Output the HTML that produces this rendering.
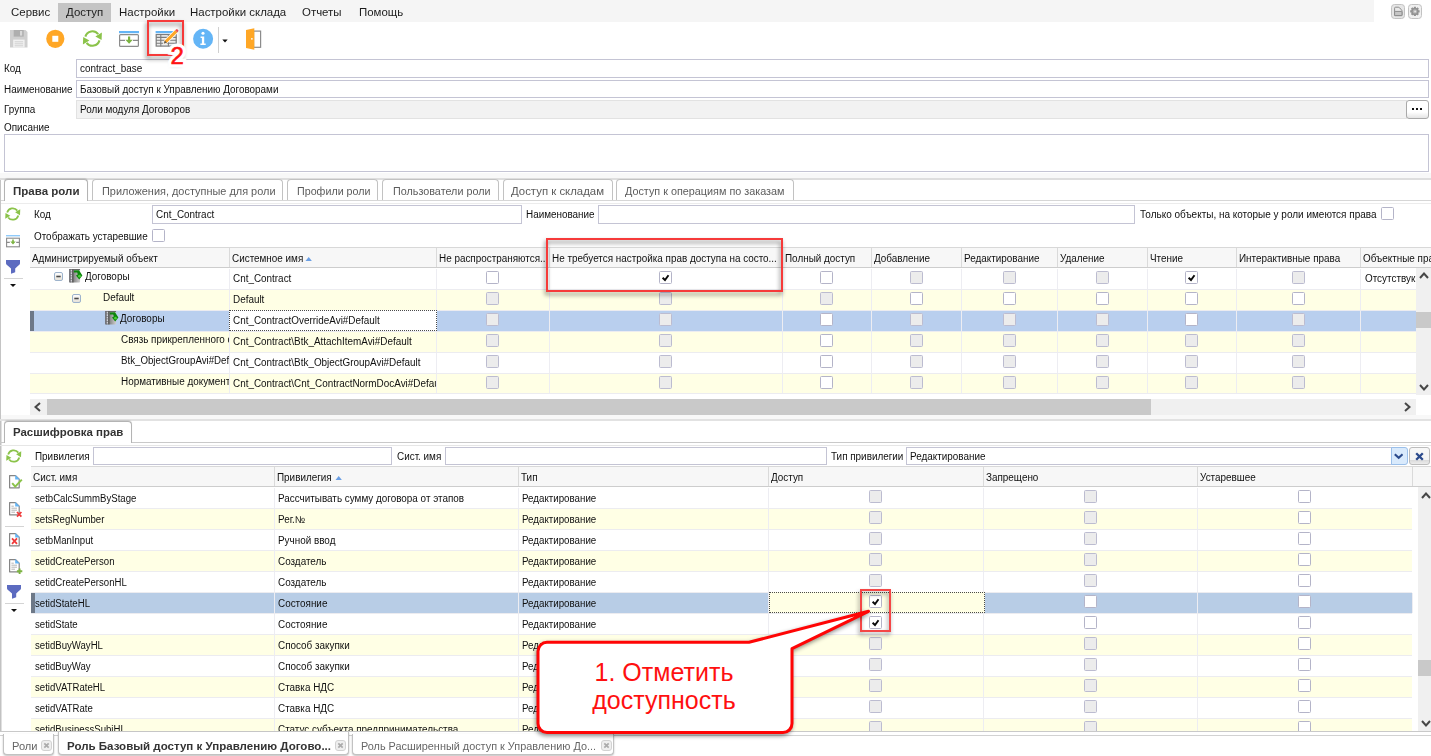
<!DOCTYPE html><html><head><meta charset="utf-8"><title>UI</title><style>
*{box-sizing:border-box;margin:0;padding:0}
html,body{width:1431px;height:756px;overflow:hidden;background:#fff}
body{font-family:"Liberation Sans",sans-serif;font-size:11px;color:#1a1a1a;position:relative}
.abs{position:absolute}
.t{position:absolute;white-space:nowrap;line-height:13px;font-size:10px;transform-origin:0 0;transform:scaleX(.99);color:#101010}
.menubar{position:absolute;left:0;top:0;width:1374px;height:22px;background:#f5f5f5}
.inp{position:absolute;border:1px solid #c4c4d4;background:#fff;height:19px}
.inp.gray{background:#f2f2f2;border-color:#e2e2e2}
.hdr{position:absolute;background:#f7f7f7;border-top:1px solid #d8d8d8;border-bottom:1px solid #cdcdcd;height:21px;overflow:hidden}
.hc{position:absolute;top:0;height:19px;border-right:1px solid #dadada}
.row{position:absolute;height:21px;border-bottom:1px solid #ececf0;overflow:hidden;background:#fff}
.row.y{background:#ffffe5}
.cell{position:absolute;top:0;height:20px;border-right:1px solid #ededf2;overflow:hidden}
.cb{position:absolute;width:13px;height:13px;border:1px solid #b4b4c8;background:#fff;border-radius:1.5px}
.cb.d{background:#ececec;border-color:#bcbcd0}
.tab{position:absolute;border:1px solid #c2c2c2;border-bottom:none;border-radius:4px 4px 0 0;background:#fff;overflow:hidden}
.tab.act{border-color:#b4b4b4;box-shadow:0 -1px 1px rgba(0,0,0,.12)}
.btab{position:absolute;border:1px solid #c2c2c2;border-top:none;border-radius:0 0 4px 4px;background:#fff;box-shadow:0 1px 2px rgba(0,0,0,.25)}
</style></head><body>
<div class="menubar"></div>
<div class="abs" style="left:58px;top:3px;width:53px;height:19px;background:#c4c4c4"></div>
<div class="t" style="left:11px;top:5.2px;font-size:11.5px;line-height:14px;transform:scaleX(0.995);color:#1c1c1c;">Сервис</div>
<div class="t" style="left:66px;top:5.2px;font-size:11.5px;line-height:14px;transform:scaleX(0.995);color:#1c1c1c;">Доступ</div>
<div class="t" style="left:119px;top:5.2px;font-size:11.5px;line-height:14px;transform:scaleX(0.995);color:#1c1c1c;">Настройки</div>
<div class="t" style="left:190px;top:5.2px;font-size:11.5px;line-height:14px;transform:scaleX(0.995);color:#1c1c1c;">Настройки склада</div>
<div class="t" style="left:302px;top:5.2px;font-size:11.5px;line-height:14px;transform:scaleX(0.995);color:#1c1c1c;">Отчеты</div>
<div class="t" style="left:359px;top:5.2px;font-size:11.5px;line-height:14px;transform:scaleX(0.995);color:#1c1c1c;">Помощь</div>
<div class="abs" style="left:1391px;top:4px;width:14px;height:15px;border:1px solid #c2c2c2;border-radius:3.5px;background:#e6e6e6"></div>
<div class="abs" style="left:1407.5px;top:4px;width:14px;height:15px;border:1px solid #c2c2c2;border-radius:3.5px;background:#f0f0f0"></div>
<svg class="abs" style="left:1391px;top:4px" width="14" height="15" viewBox="0 0 14 15"><path d="M3.6 11.6V4.2q0-1 1-1h2.6q.8 0 1.4.6l1.8 2q.6.6.6 1.4v4.4z" fill="#e9e9e9" stroke="#8c8c8c" stroke-width="1"/><rect x="3.6" y="7.4" width="7.4" height="4.2" rx=".6" fill="#c6c6c6" stroke="#8c8c8c" stroke-width="1"/></svg>
<svg class="abs" style="left:1407.5px;top:4px" width="14" height="15" viewBox="0 0 14 15"><circle cx="6.9" cy="7.4" r="3.7" fill="#9a9a9a"/><g stroke="#929292" stroke-width="2.1"><path d="M6.9 2.7v9.4M2.2 7.4h9.4M3.6 4.1l6.6 6.6M10.2 4.1l-6.6 6.6"/></g><circle cx="6.9" cy="7.4" r="2.2" fill="#b4b4b4"/><circle cx="7.1" cy="7.5" r=".9" fill="#e8e8e8"/></svg>
<svg class="abs" style="left:0;top:22px" width="280" height="36" viewBox="0 22 280 36">
<!-- save (disabled) -->
<g>
<path d="M10 30h15.5l2 2v15.5H10z" fill="#cfcfcf"/>
<rect x="13.7" y="30" width="10" height="6.6" fill="#aeaeae"/>
<rect x="20" y="31" width="2.2" height="4.6" fill="#d9d9d9"/>
<rect x="13.2" y="39.6" width="11.4" height="7.9" fill="#f1f1f1"/>
<path d="M14.7 41.8h8.4M14.7 43.8h8.4M14.7 45.8h8.4" stroke="#cdcdcd" stroke-width="0.9"/>
</g>
<!-- stop (orange) -->
<circle cx="55.3" cy="38.8" r="9.1" fill="#ffa726"/>
<rect x="52.3" y="35.8" width="6" height="6" fill="#fff"/>
<!-- refresh -->
<g fill="none" stroke="#8bc34a" stroke-width="2.1">
<path d="M85.35 36.6A7.3 7.3 0 0 1 98.2 34.2"/>
<path d="M99.45 40.4A7.3 7.3 0 0 1 86.6 42.8"/>
</g>
<path d="M101.9 32.6L95.4 36.4L101.6 39.9z" fill="#8bc34a"/>
<path d="M82.9 44.4L89.4 40.6L83.2 37.1z" fill="#8bc34a"/>
<!-- table down -->
<rect x="119" y="31" width="20" height="2.2" fill="#64b5f6"/>
<rect x="119.6" y="34.6" width="18.8" height="11.8" rx="1" fill="#fff" stroke="#8c8c8c" stroke-width="1.2"/>
<path d="M119.6 40.3h5.4M133 40.3h5.4" stroke="#8a8a8a" stroke-width="1.2"/>
<path d="M128 36.5h2.2v3.3h2.6l-3.7 3.9l-3.7-3.9h2.6z" fill="#7cb342"/>
<!-- edit table -->
<rect x="155.6" y="31" width="21.2" height="2.2" fill="#64b5f6"/>
<rect x="156.2" y="34.5" width="20" height="11.6" fill="#ececec" stroke="#7c7c7c" stroke-width="1.2"/>
<path d="M156 37.4h20.4M156 40.3h20.4M156 43.2h20.4M160.8 34.4v11.8M168.4 34.4v11.8" stroke="#7c7c7c" stroke-width="1.1"/>
<path d="M163.9 43.6l.9-3l10.3-10.3l2.1 2.1l-10.3 10.3z" fill="#ffa726" stroke="#fff" stroke-width="1.5" paint-order="stroke" stroke-linejoin="round"/>
<path d="M175.1 30.3l.9-.9a1.1 1.1 0 0 1 1.6 0l.5.5a1.1 1.1 0 0 1 0 1.6l-.9.9z" fill="#ef5350"/>
<path d="M163.9 43.6l.9-3l2.1 2.1z" fill="#5a5a5a"/>
<!-- info -->
<circle cx="203.1" cy="38.7" r="10" fill="#64b5f6"/>
<circle cx="203" cy="33.3" r="1.55" fill="#fff"/>
<path d="M200.6 36.5h3.6v7h1.5v1.4h-5.3v-1.4h1.5v-5.6h-1.3z" fill="#fff"/>
<!-- sep + arrow -->
<rect x="218" y="27" width="1" height="26" fill="#d0d0d0"/>
<path d="M222.3 39.5h5.4l-2.7 3z" fill="#111"/>
<!-- door -->
<rect x="253.6" y="31.1" width="7" height="16.2" fill="#fff" stroke="#8c8c8c" stroke-width="1.2"/>
<path d="M246 30l8.3-1.8v21.6l-8.3-1.8z" fill="#ffa726"/>
<circle cx="251.9" cy="38.8" r="0.9" fill="#fff"/>
</svg>

<div class="t" style="left:4px;top:62px;">Код</div>
<div class="t" style="left:4px;top:83px;">Наименование</div>
<div class="t" style="left:4px;top:103px;">Группа</div>
<div class="t" style="left:4px;top:121px;">Описание</div>
<div class="inp" style="left:76px;top:59px;width:1353px"></div>
<div class="t" style="left:80px;top:62px;">contract_base</div>
<div class="inp" style="left:76px;top:80px;width:1353px;height:18px"></div>
<div class="t" style="left:80px;top:83px;">Базовый доступ к Управлению Договорами</div>
<div class="inp gray" style="left:76px;top:100px;width:1331px"></div>
<div class="t" style="left:80px;top:103px;">Роли модуля Договоров</div>
<div class="abs" style="left:1406px;top:100px;width:23px;height:19px;border:1px solid #a9a9a9;border-radius:3px;background:linear-gradient(#fff 0,#fff 65%,#e4e4e4 100%)"></div>
<div class="abs" style="left:1412px;top:108px;width:2px;height:2px;background:#111"></div>
<div class="abs" style="left:1416px;top:108px;width:2px;height:2px;background:#111"></div>
<div class="abs" style="left:1420px;top:108px;width:2px;height:2px;background:#111"></div>
<div class="inp" style="left:4px;top:134px;width:1425px;height:38px"></div>
<div class="abs" style="left:0;top:173px;width:1431px;height:5px;background:#f8f8f8"></div>
<div class="abs" style="left:0;top:415px;width:1431px;height:4px;background:#f8f8f8"></div>
<div class="abs" style="left:0;top:178px;width:1431px;height:2px;background:#dedede"></div>
<div class="abs" style="left:0;top:200px;width:1431px;height:1px;background:#d6d6d6"></div>
<div class="abs" style="left:0;top:203px;width:1431px;height:1px;background:#ececec"></div>
<div class="abs" style="left:0;top:180px;width:1px;height:240px;background:#c4c4c4"></div>
<div class="abs" style="left:0;top:420px;width:2px;height:312px;background:linear-gradient(90deg,#c2c2c2 0,#c2c2c2 50%,#e0e0e0 50%,#e0e0e0 100%)"></div>
<div class="tab act" style="left:4px;top:179px;width:84px;height:22px"></div>
<div class="tab" style="left:92px;top:179px;width:191px;height:21px"></div>
<div class="tab" style="left:287px;top:179px;width:91px;height:21px"></div>
<div class="tab" style="left:382px;top:179px;width:117px;height:21px"></div>
<div class="tab" style="left:503px;top:179px;width:110px;height:21px"></div>
<div class="tab" style="left:616px;top:179px;width:178px;height:21px"></div>
<div class="t" style="left:12.5px;top:184px;font-size:11px;line-height:14px;transform:scaleX(1.0480);color:#333;font-weight:bold;">Права роли</div>
<div class="t" style="left:101.5px;top:184px;font-size:11px;line-height:14px;transform:scaleX(0.9932);color:#5c5c5c;">Приложения, доступные для роли</div>
<div class="t" style="left:296.5px;top:184px;font-size:11px;line-height:14px;transform:scaleX(0.9733);color:#5c5c5c;">Профили роли</div>
<div class="t" style="left:392.5px;top:184px;font-size:11px;line-height:14px;transform:scaleX(0.9807);color:#5c5c5c;">Пользователи роли</div>
<div class="t" style="left:511px;top:184px;font-size:11px;line-height:14px;transform:scaleX(1.0355);color:#5c5c5c;">Доступ к складам</div>
<div class="t" style="left:625px;top:184px;font-size:11px;line-height:14px;transform:scaleX(0.9831);color:#5c5c5c;">Доступ к операциям по заказам</div>
<div class="t" style="left:34px;top:208px;">Код</div>
<div class="inp" style="left:152px;top:205px;width:370px"></div>
<div class="t" style="left:156px;top:208px;">Cnt_Contract</div>
<div class="t" style="left:526px;top:208px;">Наименование</div>
<div class="inp" style="left:598px;top:205px;width:537px"></div>
<div class="t" style="left:1139.5px;top:208px;transform:scaleX(0.9976);">Только объекты, на которые у роли имеются права</div>
<div class="cb" style="left:1381px;top:207.0px"></div>
<div class="t" style="left:34px;top:230px;">Отображать устаревшие</div>
<div class="cb" style="left:152px;top:229.0px"></div>
<div class="hdr" style="left:30px;top:247px;width:1401px">
<div class="hc" style="left:0px;width:200px"></div>
<div class="hc" style="left:200px;width:207px"></div>
<div class="hc" style="left:407px;width:113px"></div>
<div class="hc" style="left:520px;width:233px"></div>
<div class="hc" style="left:753px;width:89px"></div>
<div class="hc" style="left:842px;width:90px"></div>
<div class="hc" style="left:932px;width:96px"></div>
<div class="hc" style="left:1028px;width:90px"></div>
<div class="hc" style="left:1118px;width:89px"></div>
<div class="hc" style="left:1207px;width:124px"></div>
<div class="hc" style="left:1331px;width:139px"></div>
</div>
<div class="t" style="left:32px;top:252px;">Администрируемый объект</div>
<div class="t" style="left:232px;top:252px;">Системное имя</div>
<div class="t" style="left:439px;top:252px;">Не распространяются..</div>
<div class="t" style="left:552px;top:252px;">Не требуется настройка прав доступа на состо...</div>
<div class="t" style="left:785px;top:252px;">Полный доступ</div>
<div class="t" style="left:874px;top:252px;">Добавление</div>
<div class="t" style="left:964px;top:252px;">Редактирование</div>
<div class="t" style="left:1060px;top:252px;">Удаление</div>
<div class="t" style="left:1150px;top:252px;">Чтение</div>
<div class="t" style="left:1239px;top:252px;">Интерактивные права</div>
<div class="t" style="left:1363px;top:252px;">Объектные пра</div>
<svg class="abs" style="left:304.5px;top:257px" width="7.4" height="4" viewBox="0 0 8 5"><path d="M0 5L4 0L8 5z" fill="#6b9fe4"/></svg>
<div class="row" style="left:30px;top:269px;width:1386px;background:#fff">
<div class="cell" style="left:0px;width:200px;"></div>
<div class="cell" style="left:200px;width:207px;"></div>
<div class="cell" style="left:407px;width:113px;"></div>
<div class="cell" style="left:520px;width:233px;"></div>
<div class="cell" style="left:753px;width:89px;"></div>
<div class="cell" style="left:842px;width:90px;"></div>
<div class="cell" style="left:932px;width:96px;"></div>
<div class="cell" style="left:1028px;width:90px;"></div>
<div class="cell" style="left:1118px;width:89px;"></div>
<div class="cell" style="left:1207px;width:124px;"></div>
<div class="cell" style="left:1331px;width:139px;"></div>
<div class="cb" style="left:456px;top:2.0px"></div>
<div class="cb" style="left:629px;top:2.0px"><svg width="11" height="11" viewBox="0 0 11 11" style="position:absolute;left:0;top:0"><path d="M2.6 5.7 L5 8 L8.5 3.2" fill="none" stroke="#0a0a0a" stroke-width="1.9"/></svg></div>
<div class="cb" style="left:790px;top:2.0px"></div>
<div class="cb d" style="left:880px;top:2.0px"></div>
<div class="cb d" style="left:973px;top:2.0px"></div>
<div class="cb d" style="left:1066px;top:2.0px"></div>
<div class="cb" style="left:1155px;top:2.0px"><svg width="11" height="11" viewBox="0 0 11 11" style="position:absolute;left:0;top:0"><path d="M2.6 5.7 L5 8 L8.5 3.2" fill="none" stroke="#0a0a0a" stroke-width="1.9"/></svg></div>
<div class="cb d" style="left:1262px;top:2.0px"></div>
</div>
<div class="abs" style="left:30px;top:269px;width:199px;height:20px;overflow:hidden">
<div class="t" style="left:55px;top:1px;">Договоры</div>
</div>
<div class="abs" style="left:230px;top:269px;width:206px;height:20px;overflow:hidden">
<div class="t" style="left:3px;top:3px;">Cnt_Contract</div>
</div>
<div class="abs" style="left:1361px;top:269px;width:55px;height:20px;overflow:hidden">
<div class="t" style="left:4px;top:3px;">Отсутствук</div>
</div>
<div class="row" style="left:30px;top:290px;width:1386px;background:#ffffe5">
<div class="cell" style="left:0px;width:200px;"></div>
<div class="cell" style="left:200px;width:207px;"></div>
<div class="cell" style="left:407px;width:113px;"></div>
<div class="cell" style="left:520px;width:233px;"></div>
<div class="cell" style="left:753px;width:89px;"></div>
<div class="cell" style="left:842px;width:90px;"></div>
<div class="cell" style="left:932px;width:96px;"></div>
<div class="cell" style="left:1028px;width:90px;"></div>
<div class="cell" style="left:1118px;width:89px;"></div>
<div class="cell" style="left:1207px;width:124px;"></div>
<div class="cell" style="left:1331px;width:139px;"></div>
<div class="cb d" style="left:456px;top:2.0px"></div>
<div class="cb d" style="left:629px;top:2.0px"></div>
<div class="cb d" style="left:790px;top:2.0px"></div>
<div class="cb" style="left:880px;top:2.0px"></div>
<div class="cb" style="left:973px;top:2.0px"></div>
<div class="cb" style="left:1066px;top:2.0px"></div>
<div class="cb" style="left:1155px;top:2.0px"></div>
<div class="cb" style="left:1262px;top:2.0px"></div>
</div>
<div class="abs" style="left:30px;top:290px;width:199px;height:20px;overflow:hidden">
<div class="t" style="left:72.5px;top:1px;">Default</div>
</div>
<div class="abs" style="left:230px;top:290px;width:206px;height:20px;overflow:hidden">
<div class="t" style="left:3px;top:3px;">Default</div>
</div>
<div class="row" style="left:30px;top:311px;width:1386px;background:#b9cfee">
<div class="cell" style="left:0px;width:200px;"></div>
<div class="cell" style="left:200px;width:207px;"></div>
<div class="cell" style="left:407px;width:113px;"></div>
<div class="cell" style="left:520px;width:233px;"></div>
<div class="cell" style="left:753px;width:89px;"></div>
<div class="cell" style="left:842px;width:90px;"></div>
<div class="cell" style="left:932px;width:96px;"></div>
<div class="cell" style="left:1028px;width:90px;"></div>
<div class="cell" style="left:1118px;width:89px;"></div>
<div class="cell" style="left:1207px;width:124px;"></div>
<div class="cell" style="left:1331px;width:139px;"></div>
<div class="cb d" style="left:456px;top:2.0px"></div>
<div class="cb d" style="left:629px;top:2.0px"></div>
<div class="cb" style="left:790px;top:2.0px"></div>
<div class="cb d" style="left:880px;top:2.0px"></div>
<div class="cb d" style="left:973px;top:2.0px"></div>
<div class="cb d" style="left:1066px;top:2.0px"></div>
<div class="cb" style="left:1155px;top:2.0px"></div>
<div class="cb d" style="left:1262px;top:2.0px"></div>
<div class="abs" style="left:0;top:0;width:4px;height:20px;background:#6d7888"></div>
</div>
<div class="abs" style="left:229px;top:310px;width:208px;height:21px;background:#fff;border:1px dotted #4a4a4a"></div>
<div class="abs" style="left:30px;top:311px;width:199px;height:20px;overflow:hidden">
<div class="t" style="left:90px;top:1px;">Договоры</div>
</div>
<div class="abs" style="left:230px;top:311px;width:206px;height:20px;overflow:hidden">
<div class="t" style="left:3px;top:3px;">Cnt_ContractOverrideAvi#Default</div>
</div>
<div class="row" style="left:30px;top:332px;width:1386px;background:#ffffe5">
<div class="cell" style="left:0px;width:200px;"></div>
<div class="cell" style="left:200px;width:207px;"></div>
<div class="cell" style="left:407px;width:113px;"></div>
<div class="cell" style="left:520px;width:233px;"></div>
<div class="cell" style="left:753px;width:89px;"></div>
<div class="cell" style="left:842px;width:90px;"></div>
<div class="cell" style="left:932px;width:96px;"></div>
<div class="cell" style="left:1028px;width:90px;"></div>
<div class="cell" style="left:1118px;width:89px;"></div>
<div class="cell" style="left:1207px;width:124px;"></div>
<div class="cell" style="left:1331px;width:139px;"></div>
<div class="cb d" style="left:456px;top:2.0px"></div>
<div class="cb d" style="left:629px;top:2.0px"></div>
<div class="cb" style="left:790px;top:2.0px"></div>
<div class="cb d" style="left:880px;top:2.0px"></div>
<div class="cb d" style="left:973px;top:2.0px"></div>
<div class="cb d" style="left:1066px;top:2.0px"></div>
<div class="cb d" style="left:1155px;top:2.0px"></div>
<div class="cb d" style="left:1262px;top:2.0px"></div>
</div>
<div class="abs" style="left:30px;top:332px;width:199px;height:20px;overflow:hidden">
<div class="t" style="left:91px;top:1px;">Связь прикрепленного с</div>
</div>
<div class="abs" style="left:230px;top:332px;width:206px;height:20px;overflow:hidden">
<div class="t" style="left:3px;top:3px;">Cnt_Contract\Btk_AttachItemAvi#Default</div>
</div>
<div class="row" style="left:30px;top:353px;width:1386px;background:#fff">
<div class="cell" style="left:0px;width:200px;"></div>
<div class="cell" style="left:200px;width:207px;"></div>
<div class="cell" style="left:407px;width:113px;"></div>
<div class="cell" style="left:520px;width:233px;"></div>
<div class="cell" style="left:753px;width:89px;"></div>
<div class="cell" style="left:842px;width:90px;"></div>
<div class="cell" style="left:932px;width:96px;"></div>
<div class="cell" style="left:1028px;width:90px;"></div>
<div class="cell" style="left:1118px;width:89px;"></div>
<div class="cell" style="left:1207px;width:124px;"></div>
<div class="cell" style="left:1331px;width:139px;"></div>
<div class="cb d" style="left:456px;top:2.0px"></div>
<div class="cb d" style="left:629px;top:2.0px"></div>
<div class="cb" style="left:790px;top:2.0px"></div>
<div class="cb d" style="left:880px;top:2.0px"></div>
<div class="cb d" style="left:973px;top:2.0px"></div>
<div class="cb d" style="left:1066px;top:2.0px"></div>
<div class="cb d" style="left:1155px;top:2.0px"></div>
<div class="cb d" style="left:1262px;top:2.0px"></div>
</div>
<div class="abs" style="left:30px;top:353px;width:199px;height:20px;overflow:hidden">
<div class="t" style="left:91px;top:1px;transform:scaleX(0.97);">Btk_ObjectGroupAvi#Default</div>
</div>
<div class="abs" style="left:230px;top:353px;width:206px;height:20px;overflow:hidden">
<div class="t" style="left:3px;top:3px;">Cnt_Contract\Btk_ObjectGroupAvi#Default</div>
</div>
<div class="row" style="left:30px;top:374px;width:1386px;background:#ffffe5">
<div class="cell" style="left:0px;width:200px;"></div>
<div class="cell" style="left:200px;width:207px;"></div>
<div class="cell" style="left:407px;width:113px;"></div>
<div class="cell" style="left:520px;width:233px;"></div>
<div class="cell" style="left:753px;width:89px;"></div>
<div class="cell" style="left:842px;width:90px;"></div>
<div class="cell" style="left:932px;width:96px;"></div>
<div class="cell" style="left:1028px;width:90px;"></div>
<div class="cell" style="left:1118px;width:89px;"></div>
<div class="cell" style="left:1207px;width:124px;"></div>
<div class="cell" style="left:1331px;width:139px;"></div>
<div class="cb d" style="left:456px;top:2.0px"></div>
<div class="cb d" style="left:629px;top:2.0px"></div>
<div class="cb" style="left:790px;top:2.0px"></div>
<div class="cb d" style="left:880px;top:2.0px"></div>
<div class="cb d" style="left:973px;top:2.0px"></div>
<div class="cb d" style="left:1066px;top:2.0px"></div>
<div class="cb d" style="left:1155px;top:2.0px"></div>
<div class="cb d" style="left:1262px;top:2.0px"></div>
</div>
<div class="abs" style="left:30px;top:374px;width:199px;height:20px;overflow:hidden">
<div class="t" style="left:91px;top:1px;">Нормативные документы</div>
</div>
<div class="abs" style="left:230px;top:374px;width:206px;height:20px;overflow:hidden">
<div class="t" style="left:3px;top:3px;">Cnt_Contract\Cnt_ContractNormDocAvi#Default</div>
</div>
<div class="abs" style="left:30px;top:393px;width:1386px;height:6px;background:#fff;border-top:1px solid #ececf0"></div>
<svg width="0" height="0" style="position:absolute"><defs>
<linearGradient id="g-exp" x1="0" y1="0" x2="0" y2="1"><stop offset="0" stop-color="#fff"/><stop offset="1" stop-color="#e4e0d6"/></linearGradient>
<linearGradient id="g-door" x1="0" y1="0" x2="1" y2="0"><stop offset="0" stop-color="#6e6e6e"/><stop offset=".45" stop-color="#8c8c8c"/><stop offset="1" stop-color="#d0d0d0"/></linearGradient>
<g id="i-exp"><rect x=".5" y=".5" width="8" height="8" rx="1.5" fill="url(#g-exp)" stroke="#9db3cc"/><rect x="2.3" y="3.7" width="4.4" height="1.6" fill="#4a4a4a"/></g>
<g id="i-door"><rect x=".3" y=".1" width="10.8" height="13.3" rx=".9" fill="url(#g-door)"/><rect x=".3" y=".1" width="10.8" height="1" rx=".5" fill="#6a6a6a"/><rect x=".3" y=".1" width="1.4" height="13.3" fill="#6c6c72"/><path d="M2.3 .8v12.4" stroke="#e2e2ea" stroke-width="1.1" stroke-dasharray="1.6 .9"/><rect x="3.1" y=".1" width="1.5" height="13.3" fill="#5e5e5e"/><path d="M4.9 1.4L10 1.2L13.4 6.6L10.2 10.6L7 6.4L8.8 5.6L8.2 3.6L4.9 3.6Z" fill="#0c860c"/><circle cx="10.5" cy="7.2" r="1.35" fill="#4ad038"/></g>
</defs></svg>
<svg class="abs" style="left:54px;top:272.2px" width="9" height="9" viewBox="0 0 9 9"><use href="#i-exp"/></svg>
<svg class="abs" style="left:69.4px;top:269px" width="14" height="14" viewBox="0 0 14 14"><use href="#i-door"/></svg>
<svg class="abs" style="left:72px;top:293.6px" width="9" height="9" viewBox="0 0 9 9"><use href="#i-exp"/></svg>
<svg class="abs" style="left:104.6px;top:311px" width="14" height="14" viewBox="0 0 14 14"><use href="#i-door"/></svg>

<div class="abs" style="left:1416px;top:268px;width:15px;height:127px;background:#f0f0f0"></div>
<div class="abs" style="left:1416px;top:312px;width:15px;height:16px;background:#c9c9c9"></div>
<svg class="abs" style="left:1419px;top:272px" width="10" height="7" viewBox="0 0 10 7"><path d="M1 6L5 1.5L9 6" fill="none" stroke="#474747" stroke-width="2"/></svg>
<svg class="abs" style="left:1419px;top:384px" width="10" height="7" viewBox="0 0 10 7"><path d="M1 1L5 5.5L9 1" fill="none" stroke="#474747" stroke-width="2"/></svg>
<div class="abs" style="left:30px;top:399px;width:1386px;height:16px;background:#f0f0f0"></div>
<div class="abs" style="left:47px;top:399px;width:1104px;height:16px;background:#c9c9c9"></div>
<svg class="abs" style="left:34px;top:402px" width="7" height="10" viewBox="0 0 7 10"><path d="M6 1L1.5 5L6 9" fill="none" stroke="#474747" stroke-width="2"/></svg>
<svg class="abs" style="left:1404px;top:402px" width="7" height="10" viewBox="0 0 7 10"><path d="M1 1L5.5 5L1 9" fill="none" stroke="#474747" stroke-width="2"/></svg>
<div class="abs" style="left:0;top:419px;width:1431px;height:2px;background:#e2e2e2"></div>
<div class="abs" style="left:0;top:442px;width:1431px;height:1px;background:#c9c9c9"></div>
<div class="abs" style="left:0;top:445px;width:1431px;height:1px;background:#e6e6e6"></div>
<div class="tab act" style="left:4px;top:421px;width:128px;height:22px"></div>
<div class="t" style="left:13px;top:425px;font-size:11px;line-height:14px;transform:scaleX(1.04);color:#333;font-weight:bold;">Расшифровка прав</div>
<div class="t" style="left:35px;top:450px;">Привилегия</div>
<div class="inp" style="left:93px;top:447px;width:299px;height:18px"></div>
<div class="t" style="left:397px;top:450px;">Сист. имя</div>
<div class="inp" style="left:445px;top:447px;width:382px;height:18px"></div>
<div class="t" style="left:831px;top:450px;">Тип привилегии</div>
<div class="inp" style="left:906px;top:447px;width:486px;height:18px"></div>
<div class="t" style="left:910px;top:450px;">Редактирование</div>
<div class="abs" style="left:1391px;top:447px;width:17px;height:18px;border:1px solid #9bbfe9;border-radius:0 3px 3px 0;background:#d9eafc"></div>
<svg class="abs" style="left:1394px;top:453.4px" width="9.4" height="6.4" viewBox="0 0 9.4 6.4"><path d="M.8 1.2L4.7 4.8L8.6 1.2" fill="none" stroke="#2b4a8c" stroke-width="2.1"/></svg>
<div class="abs" style="left:1409px;top:447px;width:21px;height:18px;border:1px solid #bcbcbc;border-radius:3px;background:linear-gradient(#f8f8f8 0,#f4f4f4 72%,#dcdcdc 78%,#ececec 100%)"></div>
<svg class="abs" style="left:1414.6px;top:452.2px" width="9" height="9" viewBox="0 0 9 9"><path d="M1.2 1.2L7.8 7.8M7.8 1.2L1.2 7.8" fill="none" stroke="#2b4a8c" stroke-width="2.3"/></svg>
<div class="hdr" style="left:31px;top:466px;width:1400px">
<div class="hc" style="left:0px;width:244px"></div>
<div class="hc" style="left:244px;width:244px"></div>
<div class="hc" style="left:488px;width:250px"></div>
<div class="hc" style="left:738px;width:215px"></div>
<div class="hc" style="left:953px;width:214px"></div>
<div class="hc" style="left:1167px;width:215px"></div>
</div>
<div class="t" style="left:33px;top:471px;">Сист. имя</div>
<div class="t" style="left:277px;top:471px;">Привилегия</div>
<div class="t" style="left:521px;top:471px;">Тип</div>
<div class="t" style="left:771px;top:471px;">Доступ</div>
<div class="t" style="left:986px;top:471px;">Запрещено</div>
<div class="t" style="left:1200px;top:471px;">Устаревшее</div>
<svg class="abs" style="left:334.5px;top:476px" width="7.4" height="4" viewBox="0 0 8 5"><path d="M0 5L4 0L8 5z" fill="#6b9fe4"/></svg>
<div class="abs" style="left:31px;top:488px;width:1400px;height:243px;overflow:hidden">
<div class="row" style="left:0;top:0px;width:1381px;background:#fff;">
<div class="cell" style="left:0px;width:244px;"></div>
<div class="cell" style="left:244px;width:244px;"></div>
<div class="cell" style="left:488px;width:250px;"></div>
<div class="cell" style="left:738px;width:215px;"></div>
<div class="cell" style="left:953px;width:214px;"></div>
<div class="cell" style="left:1167px;width:215px;"></div>
<div class="cb d" style="left:838px;top:2.0px"></div>
<div class="cb d" style="left:1053px;top:2.0px"></div>
<div class="cb" style="left:1267px;top:2.0px"></div>
<div class="t" style="left:4px;top:4px;transform:scaleX(0.96);">setbCalcSummByStage</div>
<div class="t" style="left:247px;top:4px;">Рассчитывать сумму договора от этапов</div>
<div class="t" style="left:491px;top:4px;transform:scaleX(0.975);">Редактирование</div>
</div>
<div class="row" style="left:0;top:21px;width:1381px;background:#ffffe5;">
<div class="cell" style="left:0px;width:244px;"></div>
<div class="cell" style="left:244px;width:244px;"></div>
<div class="cell" style="left:488px;width:250px;"></div>
<div class="cell" style="left:738px;width:215px;"></div>
<div class="cell" style="left:953px;width:214px;"></div>
<div class="cell" style="left:1167px;width:215px;"></div>
<div class="cb d" style="left:838px;top:2.0px"></div>
<div class="cb d" style="left:1053px;top:2.0px"></div>
<div class="cb" style="left:1267px;top:2.0px"></div>
<div class="t" style="left:4px;top:4px;transform:scaleX(0.96);">setsRegNumber</div>
<div class="t" style="left:247px;top:4px;">Рег.№</div>
<div class="t" style="left:491px;top:4px;transform:scaleX(0.975);">Редактирование</div>
</div>
<div class="row" style="left:0;top:42px;width:1381px;background:#fff;">
<div class="cell" style="left:0px;width:244px;"></div>
<div class="cell" style="left:244px;width:244px;"></div>
<div class="cell" style="left:488px;width:250px;"></div>
<div class="cell" style="left:738px;width:215px;"></div>
<div class="cell" style="left:953px;width:214px;"></div>
<div class="cell" style="left:1167px;width:215px;"></div>
<div class="cb d" style="left:838px;top:2.0px"></div>
<div class="cb d" style="left:1053px;top:2.0px"></div>
<div class="cb" style="left:1267px;top:2.0px"></div>
<div class="t" style="left:4px;top:4px;transform:scaleX(0.96);">setbManInput</div>
<div class="t" style="left:247px;top:4px;">Ручной ввод</div>
<div class="t" style="left:491px;top:4px;transform:scaleX(0.975);">Редактирование</div>
</div>
<div class="row" style="left:0;top:63px;width:1381px;background:#ffffe5;">
<div class="cell" style="left:0px;width:244px;"></div>
<div class="cell" style="left:244px;width:244px;"></div>
<div class="cell" style="left:488px;width:250px;"></div>
<div class="cell" style="left:738px;width:215px;"></div>
<div class="cell" style="left:953px;width:214px;"></div>
<div class="cell" style="left:1167px;width:215px;"></div>
<div class="cb d" style="left:838px;top:2.0px"></div>
<div class="cb d" style="left:1053px;top:2.0px"></div>
<div class="cb" style="left:1267px;top:2.0px"></div>
<div class="t" style="left:4px;top:4px;transform:scaleX(0.96);">setidCreatePerson</div>
<div class="t" style="left:247px;top:4px;">Создатель</div>
<div class="t" style="left:491px;top:4px;transform:scaleX(0.975);">Редактирование</div>
</div>
<div class="row" style="left:0;top:84px;width:1381px;background:#fff;">
<div class="cell" style="left:0px;width:244px;"></div>
<div class="cell" style="left:244px;width:244px;"></div>
<div class="cell" style="left:488px;width:250px;"></div>
<div class="cell" style="left:738px;width:215px;"></div>
<div class="cell" style="left:953px;width:214px;"></div>
<div class="cell" style="left:1167px;width:215px;"></div>
<div class="cb d" style="left:838px;top:2.0px"></div>
<div class="cb d" style="left:1053px;top:2.0px"></div>
<div class="cb" style="left:1267px;top:2.0px"></div>
<div class="t" style="left:4px;top:4px;transform:scaleX(0.96);">setidCreatePersonHL</div>
<div class="t" style="left:247px;top:4px;">Создатель</div>
<div class="t" style="left:491px;top:4px;transform:scaleX(0.975);">Редактирование</div>
</div>
<div class="row" style="left:0;top:105px;width:1381px;background:#b8cde6;overflow:visible;">
<div class="cell" style="left:0px;width:244px;"></div>
<div class="cell" style="left:244px;width:244px;"></div>
<div class="cell" style="left:488px;width:250px;"></div>
<div class="cell" style="left:738px;width:215px;"></div>
<div class="cell" style="left:953px;width:214px;"></div>
<div class="cell" style="left:1167px;width:215px;"></div>
<div class="abs" style="left:738px;top:-1px;width:216px;height:21px;background:#ffffe5;border:1px dotted #4a4a4a"></div>
<div class="cb" style="left:838px;top:2.0px"><svg width="11" height="11" viewBox="0 0 11 11" style="position:absolute;left:0;top:0"><path d="M2.6 5.7 L5 8 L8.5 3.2" fill="none" stroke="#0a0a0a" stroke-width="1.9"/></svg></div>
<div class="cb" style="left:1053px;top:2.0px"></div>
<div class="cb" style="left:1267px;top:2.0px"></div>
<div class="abs" style="left:0;top:0;width:4px;height:20px;background:#6d7888"></div>
<div class="t" style="left:4px;top:4px;transform:scaleX(0.96);">setidStateHL</div>
<div class="t" style="left:247px;top:4px;">Состояние</div>
<div class="t" style="left:491px;top:4px;transform:scaleX(0.975);">Редактирование</div>
</div>
<div class="row" style="left:0;top:126px;width:1381px;background:#fff;">
<div class="cell" style="left:0px;width:244px;"></div>
<div class="cell" style="left:244px;width:244px;"></div>
<div class="cell" style="left:488px;width:250px;"></div>
<div class="cell" style="left:738px;width:215px;"></div>
<div class="cell" style="left:953px;width:214px;"></div>
<div class="cell" style="left:1167px;width:215px;"></div>
<div class="cb" style="left:838px;top:2.0px"><svg width="11" height="11" viewBox="0 0 11 11" style="position:absolute;left:0;top:0"><path d="M2.6 5.7 L5 8 L8.5 3.2" fill="none" stroke="#0a0a0a" stroke-width="1.9"/></svg></div>
<div class="cb" style="left:1053px;top:2.0px"></div>
<div class="cb" style="left:1267px;top:2.0px"></div>
<div class="t" style="left:4px;top:4px;transform:scaleX(0.96);">setidState</div>
<div class="t" style="left:247px;top:4px;">Состояние</div>
<div class="t" style="left:491px;top:4px;transform:scaleX(0.975);">Редактирование</div>
</div>
<div class="row" style="left:0;top:147px;width:1381px;background:#ffffe5;">
<div class="cell" style="left:0px;width:244px;"></div>
<div class="cell" style="left:244px;width:244px;"></div>
<div class="cell" style="left:488px;width:250px;"></div>
<div class="cell" style="left:738px;width:215px;"></div>
<div class="cell" style="left:953px;width:214px;"></div>
<div class="cell" style="left:1167px;width:215px;"></div>
<div class="cb d" style="left:838px;top:2.0px"></div>
<div class="cb d" style="left:1053px;top:2.0px"></div>
<div class="cb" style="left:1267px;top:2.0px"></div>
<div class="t" style="left:4px;top:4px;transform:scaleX(0.96);">setidBuyWayHL</div>
<div class="t" style="left:247px;top:4px;">Способ закупки</div>
<div class="t" style="left:491px;top:4px;transform:scaleX(0.975);">Редактирование</div>
</div>
<div class="row" style="left:0;top:168px;width:1381px;background:#fff;">
<div class="cell" style="left:0px;width:244px;"></div>
<div class="cell" style="left:244px;width:244px;"></div>
<div class="cell" style="left:488px;width:250px;"></div>
<div class="cell" style="left:738px;width:215px;"></div>
<div class="cell" style="left:953px;width:214px;"></div>
<div class="cell" style="left:1167px;width:215px;"></div>
<div class="cb d" style="left:838px;top:2.0px"></div>
<div class="cb d" style="left:1053px;top:2.0px"></div>
<div class="cb" style="left:1267px;top:2.0px"></div>
<div class="t" style="left:4px;top:4px;transform:scaleX(0.96);">setidBuyWay</div>
<div class="t" style="left:247px;top:4px;">Способ закупки</div>
<div class="t" style="left:491px;top:4px;transform:scaleX(0.975);">Редактирование</div>
</div>
<div class="row" style="left:0;top:189px;width:1381px;background:#ffffe5;">
<div class="cell" style="left:0px;width:244px;"></div>
<div class="cell" style="left:244px;width:244px;"></div>
<div class="cell" style="left:488px;width:250px;"></div>
<div class="cell" style="left:738px;width:215px;"></div>
<div class="cell" style="left:953px;width:214px;"></div>
<div class="cell" style="left:1167px;width:215px;"></div>
<div class="cb d" style="left:838px;top:2.0px"></div>
<div class="cb d" style="left:1053px;top:2.0px"></div>
<div class="cb" style="left:1267px;top:2.0px"></div>
<div class="t" style="left:4px;top:4px;transform:scaleX(0.96);">setidVATRateHL</div>
<div class="t" style="left:247px;top:4px;">Ставка НДС</div>
<div class="t" style="left:491px;top:4px;transform:scaleX(0.975);">Редактирование</div>
</div>
<div class="row" style="left:0;top:210px;width:1381px;background:#fff;">
<div class="cell" style="left:0px;width:244px;"></div>
<div class="cell" style="left:244px;width:244px;"></div>
<div class="cell" style="left:488px;width:250px;"></div>
<div class="cell" style="left:738px;width:215px;"></div>
<div class="cell" style="left:953px;width:214px;"></div>
<div class="cell" style="left:1167px;width:215px;"></div>
<div class="cb d" style="left:838px;top:2.0px"></div>
<div class="cb d" style="left:1053px;top:2.0px"></div>
<div class="cb" style="left:1267px;top:2.0px"></div>
<div class="t" style="left:4px;top:4px;transform:scaleX(0.96);">setidVATRate</div>
<div class="t" style="left:247px;top:4px;">Ставка НДС</div>
<div class="t" style="left:491px;top:4px;transform:scaleX(0.975);">Редактирование</div>
</div>
<div class="row" style="left:0;top:231px;width:1381px;background:#ffffe5;">
<div class="cell" style="left:0px;width:244px;"></div>
<div class="cell" style="left:244px;width:244px;"></div>
<div class="cell" style="left:488px;width:250px;"></div>
<div class="cell" style="left:738px;width:215px;"></div>
<div class="cell" style="left:953px;width:214px;"></div>
<div class="cell" style="left:1167px;width:215px;"></div>
<div class="cb d" style="left:838px;top:2.0px"></div>
<div class="cb d" style="left:1053px;top:2.0px"></div>
<div class="cb" style="left:1267px;top:2.0px"></div>
<div class="t" style="left:4px;top:4px;transform:scaleX(0.96);">setidBusinessSubjHL</div>
<div class="t" style="left:247px;top:4px;">Статус субъекта предпринимательства</div>
<div class="t" style="left:491px;top:4px;transform:scaleX(0.975);">Редактирование</div>
</div>
</div>
<div class="abs" style="left:1418px;top:487px;width:13px;height:244px;background:#f0f0f0"></div>
<div class="abs" style="left:1418px;top:660px;width:13px;height:16px;background:#c9c9c9"></div>
<svg class="abs" style="left:1420.6px;top:492px" width="10" height="7" viewBox="0 0 10 7"><path d="M1 6L5 1.5L9 6" fill="none" stroke="#474747" stroke-width="2"/></svg>
<svg class="abs" style="left:1420.6px;top:720px" width="10" height="7" viewBox="0 0 10 7"><path d="M1 1L5 5.5L9 1" fill="none" stroke="#474747" stroke-width="2"/></svg>
<div class="abs" style="left:0;top:734.5px;width:1431px;height:1px;background:#d2d2d2"></div>
<div class="abs" style="left:0;top:731px;width:1431px;height:1px;background:#c9c9c9"></div>
<svg width="0" height="0" style="position:absolute"><defs>
<g id="i-refresh"><g transform="scale(.79) translate(-82.6 -29.6)"><g fill="none" stroke="#8bc34a" stroke-width="2.2"><path d="M85.35 36.6A7.3 7.3 0 0 1 98.2 34.2"/><path d="M99.45 40.4A7.3 7.3 0 0 1 86.6 42.8"/></g><path d="M101.9 32.6L95.4 36.4L101.6 39.9z" fill="#8bc34a"/><path d="M82.9 44.4L89.4 40.6L83.2 37.1z" fill="#8bc34a"/></g></g>
<g id="i-tabledown"><rect x="0" y="0" width="14" height="1.4" fill="#90caf9"/><rect x=".6" y="3.2" width="12.8" height="8.6" fill="#fff" stroke="#8a8a8a" stroke-width="1.1"/><path d="M.6 7.4h3.2M10.2 7.4h3.2" stroke="#8a8a8a" stroke-width="1.1"/><path d="M6.2 4.4h1.6v2.2h1.9L7 9.6L4.3 6.6h1.9z" fill="#7cb342"/></g>
<g id="i-funnel"><path d="M0 0h14v3.4Q13.6 4.6 12.4 5.6L9.2 8.6v3.6L5 13.7V8.6L1.6 5.6Q.4 4.6 0 3.4z" fill="#5c6bc0"/></g>
<g id="i-doc"><path d="M.6.6h6l3.6 3.6v8.6H.6z" fill="#fff" stroke="#858585" stroke-width="1.2" stroke-linejoin="round"/><path d="M6.2 0l4.6 4.6H6.2z" fill="#64b5f6"/></g>
<g id="i-doclines"><path d="M2.4 4.2h2.4M2.4 6.2h5.6M2.4 8.2h5.6M2.4 10.2h3.6" stroke="#b5b5b5" stroke-width="1"/></g>
</defs></svg>
<!-- upper side toolbar -->
<svg class="abs" style="left:5.3px;top:207.4px" width="16" height="15" viewBox="0 0 16 15"><use href="#i-refresh"/></svg>
<svg class="abs" style="left:6px;top:235.1px" width="15" height="13" viewBox="0 0 15 13"><use href="#i-tabledown"/></svg>
<svg class="abs" style="left:6.1px;top:259.6px" width="14" height="14" viewBox="0 0 14 14"><use href="#i-funnel"/></svg>
<div class="abs" style="left:4px;top:278px;width:19px;height:1px;background:#d4d4d4"></div>
<svg class="abs" style="left:10px;top:283.5px" width="6" height="3" viewBox="0 0 6 3"><path d="M0 0h6L3 3z" fill="#111"/></svg>
<!-- lower side toolbar -->
<svg class="abs" style="left:6px;top:449.4px" width="16" height="15" viewBox="0 0 16 15"><use href="#i-refresh"/></svg>
<svg class="abs" style="left:8.6px;top:475.2px" width="14" height="15" viewBox="0 0 14 15"><use href="#i-doc"/><path d="M3.2 8.2l3 3.4l6.6-7" fill="none" stroke="#8bc34a" stroke-width="2"/></svg>
<svg class="abs" style="left:8.6px;top:501.8px" width="14" height="16" viewBox="0 0 14 16"><use href="#i-doc"/><use href="#i-doclines"/><path d="M8 10l4.4 4.6M12.4 10L8 14.6" stroke="#ef3b3b" stroke-width="1.8"/></svg>
<div class="abs" style="left:5px;top:526px;width:19px;height:1px;background:#d4d4d4"></div>
<svg class="abs" style="left:8.6px;top:532.6px" width="14" height="15" viewBox="0 0 14 15"><use href="#i-doc"/><path d="M3 5.4l5 5.4M8 5.4l-5 5.4" stroke="#ef3b3b" stroke-width="1.8"/></svg>
<svg class="abs" style="left:8.6px;top:558.8px" width="15" height="16" viewBox="0 0 15 16"><use href="#i-doc"/><use href="#i-doclines"/><path d="M10.6 9.6v5.4M7.9 12.3h5.4" stroke="#7cb342" stroke-width="1.9"/></svg>
<svg class="abs" style="left:7px;top:585px" width="14" height="14" viewBox="0 0 14 14"><use href="#i-funnel"/></svg>
<div class="abs" style="left:5px;top:603px;width:19px;height:1px;background:#d4d4d4"></div>
<svg class="abs" style="left:11px;top:609px" width="6" height="3" viewBox="0 0 6 3"><path d="M0 0h6L3 3z" fill="#111"/></svg>

<div class="btab" style="left:3px;top:734px;width:51px;height:21px"></div>
<div class="btab" style="left:58px;top:732px;width:291px;height:23px"></div>
<div class="btab" style="left:352px;top:734px;width:262px;height:21px"></div>
<div class="t" style="left:12px;top:739px;font-size:11px;line-height:14px;transform:scaleX(1.01);color:#666;">Роли</div>
<div class="t" style="left:67px;top:739px;font-size:11px;line-height:14px;transform:scaleX(1.0486);color:#333;font-weight:bold;">Роль Базовый доступ к Управлению Догово...</div>
<div class="t" style="left:361px;top:739px;font-size:11px;line-height:14px;transform:scaleX(0.9884);color:#666;">Роль Расширенный доступ к Управлению До...</div>
<div class="abs" style="left:41px;top:740px;width:11px;height:11px;border:1px solid #d2d2d2;border-radius:3px;background:#efefef"></div><svg class="abs" style="left:41px;top:740px" width="11" height="11" viewBox="0 0 11 11"><path d="M3.3 3.3L7.7 7.7M7.7 3.3L3.3 7.7" stroke="#ababab" stroke-width="1.7"/></svg>
<div class="abs" style="left:335px;top:740px;width:11px;height:11px;border:1px solid #d2d2d2;border-radius:3px;background:#efefef"></div><svg class="abs" style="left:335px;top:740px" width="11" height="11" viewBox="0 0 11 11"><path d="M3.3 3.3L7.7 7.7M7.7 3.3L3.3 7.7" stroke="#ababab" stroke-width="1.7"/></svg>
<div class="abs" style="left:601px;top:740px;width:11px;height:11px;border:1px solid #d2d2d2;border-radius:3px;background:#efefef"></div><svg class="abs" style="left:601px;top:740px" width="11" height="11" viewBox="0 0 11 11"><path d="M3.3 3.3L7.7 7.7M7.7 3.3L3.3 7.7" stroke="#ababab" stroke-width="1.7"/></svg>
<!-- red frame around edit icon -->
<div class="abs" style="left:147px;top:20px;width:37.1px;height:35.9px;border:2.4px solid #f63a3a;filter:drop-shadow(-1px 3px 2px rgba(0,0,0,.5))"></div>
<!-- number 2 -->
<div class="abs" style="left:170.6px;top:42px;font-size:24px;line-height:28px;color:#fff;-webkit-text-stroke:7px #fff;text-shadow:-1px 2px 3px rgba(0,0,0,.6),0 0 2px rgba(0,0,0,.45)">2</div>
<div class="abs" style="left:170.6px;top:42px;font-size:24px;line-height:28px;color:#ff1414;-webkit-text-stroke:.6px #ff1414">2</div>
<!-- red frame around column header -->
<div class="abs" style="left:545.7px;top:237.9px;width:237.5px;height:54.6px;border:2.4px solid #f63a3a;filter:drop-shadow(-1px 3px 2px rgba(0,0,0,.5))"></div>
<!-- red frame around the two checkboxes -->
<div class="abs" style="left:859.8px;top:589.3px;width:31.2px;height:42.5px;border:2.5px solid #f44646;filter:drop-shadow(-1px 3px 2px rgba(0,0,0,.45))"></div>
<!-- callout -->
<svg class="abs" style="left:520px;top:596px;filter:drop-shadow(-1px 2px 2px rgba(0,0,0,.45))" width="370" height="150" viewBox="520 596 370 150">
<path d="M547 642.3 H749 L868.5 611.3 L792 648.6 V723.5 a9 9 0 0 1 -9 9 H547 a9 9 0 0 1 -9 -9 V651.3 a9 9 0 0 1 9 -9 Z" fill="#fff" stroke="#ff0505" stroke-width="3" stroke-linejoin="round"/>
</svg>
<div class="abs" style="left:537px;top:658.4px;width:254px;text-align:center;font-size:25px;line-height:28px;color:#ff1010;white-space:nowrap">1. Отметить<br>доступность</div>

</body></html>
